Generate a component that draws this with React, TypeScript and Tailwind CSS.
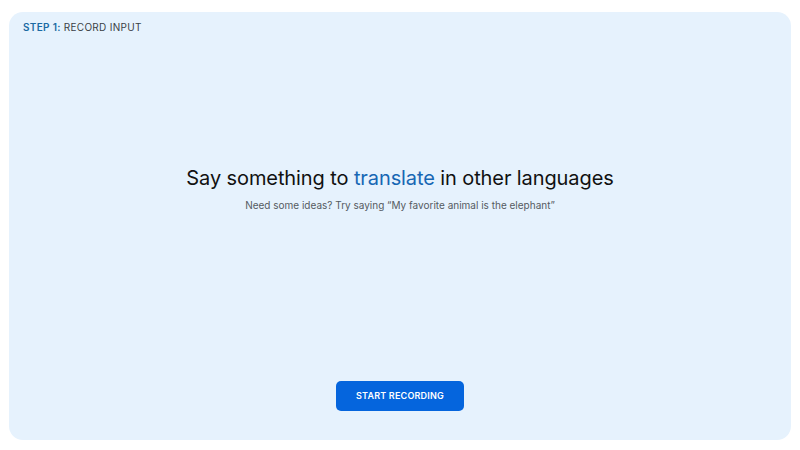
import React from 'react';

const App: React.FC = () => {
  return (
    <div
      className="w-[800px] h-[450px] bg-white px-[9px] pt-[12px] pb-[10px]"
      style={{ fontFamily: 'Inter, "Noto Sans", sans-serif' }}
    >
      <div className="h-full rounded-[14px] bg-[#e6f2fd] flex flex-col px-[14px] pt-[9px] pb-[29px]">
        <div className="text-[10px] leading-[12px] tracking-[0.3px] text-[#3a3f45]">
          <span className="font-semibold text-[#1b6aa3]">STEP 1:</span> RECORD INPUT
        </div>

        <div className="flex-1 flex flex-col items-center justify-center pb-[38px]">
          <h1 className="text-[20px] leading-[26px] font-normal text-[#111] tracking-[-0.1px]">
            Say something to <span className="text-[#1767b4]">translate</span> in other languages
          </h1>
          <p className="mt-[8px] text-[10px] leading-[12px] text-[#555b61]">
            Need some ideas? Try saying “My favorite animal is the elephant”
          </p>
        </div>

        <div className="flex justify-center">
          <button className="w-[128px] h-[30px] rounded-[5px] bg-[#0565dd] text-white text-[9px] font-semibold tracking-[0.2px]">
            START RECORDING
          </button>
        </div>
      </div>
    </div>
  );
};

export default App;
